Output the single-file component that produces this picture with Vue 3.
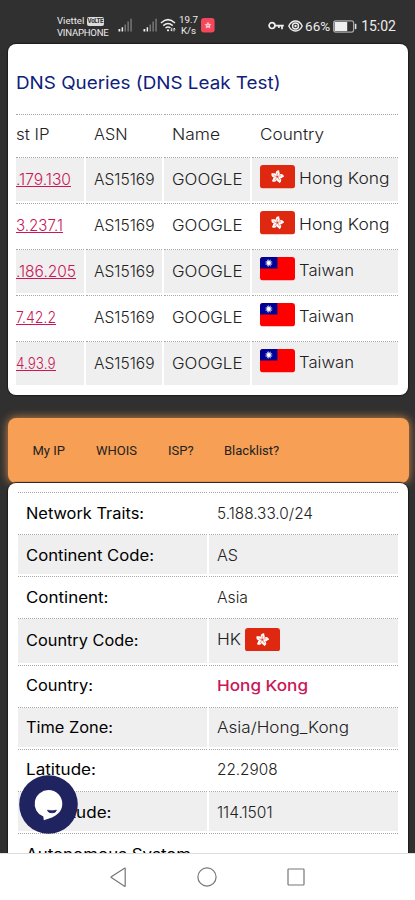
<script setup>
import { h } from 'vue'

// One line of text set to an exact measure; its bottom edge is the baseline.
const FitText = ({ text, w }) =>
  h('svg', { class: 'fit', width: w, height: 12 }, [
    h('text', { x: 0, y: 12, textLength: w, lengthAdjust: 'spacingAndGlyphs' }, text),
  ])
FitText.props = ['text', 'w']

const queries = [
  { ip: '.179.130', w: 55, flag: 'hk', country: 'Hong Kong', cw: 90.5 },
  { ip: '3.237.1', w: 47, flag: 'hk', country: 'Hong Kong', cw: 90.5 },
  { ip: '.186.205', w: 60, flag: 'tw', country: 'Taiwan', cw: 55 },
  { ip: '7.42.2', w: 40, flag: 'tw', country: 'Taiwan', cw: 55 },
  { ip: '4.93.9', w: 39.5, flag: 'tw', country: 'Taiwan', cw: 55 },
]
const traits = [
  { label: 'Network Traits:', lw: 118, value: '5.188.33.0/24', vw: 96 },
  { label: 'Continent Code:', lw: 128, value: 'AS', vw: 21 },
  { label: 'Continent:', lw: 82.5, value: 'Asia', vw: 31 },
  { label: 'Country Code:', lw: 112.5, value: 'HK', vw: 24, flag: true },
  { label: 'Country:', lw: 67, value: 'Hong Kong', vw: 91, strong: true },
  { label: 'Time Zone:', lw: 87, value: 'Asia/Hong_Kong', vw: 132 },
  { label: 'Latitude:', lw: 70, value: '22.2908', vw: 60.5 },
  { label: 'Longitude:', lw: 85.5, value: '114.1501', vw: 55.5 },
]
const petals = [0, 72, 144, 216, 288]
const rays = [0, 30, 60, 90, 120, 150]
</script>

<template>
  <div class="screen">
    <svg width="0" height="0" class="defs">
      <symbol id="hk" viewBox="0 0 35 23.5">
        <rect width="35" height="23.5" rx="3" fill="#de2810" />
        <g transform="translate(17.3 11.8)">
          <g v-for="a in petals" :key="a" :transform="`rotate(${a + 12})`">
            <path d="M0 -.6C-3.4 -2.4 -3 -6.2 .6 -6.8C.1 -5.4 2.6 -4.3 1.6 -2.2C1.2 -1.3 .5 -1.2 0 -.6Z" fill="#fff" />
            <path d="M0 -1Q-1.1 -2.4 -.5 -4" fill="none" stroke="#de2810" stroke-width=".45" />
          </g>
        </g>
      </symbol>
      <symbol id="tw" viewBox="0 0 35 23.5">
        <rect width="35" height="23.5" rx="3" fill="#fe0000" />
        <path d="M3 0H17.4V11.6H0V3Q0 0 3 0Z" fill="#000095" />
        <g transform="translate(8.8 6)">
          <path v-for="a in rays" :key="a" d="M0 -4.2L1 0L0 4.2L-1 0Z" :transform="`rotate(${a})`" fill="#fff" />
          <circle r="2.4" fill="#fff" stroke="#000095" stroke-width=".35" />
        </g>
      </symbol>
    </svg>

    <header class="status">
      <div class="carriers">
        <div class="carrier">Viettel <span class="volte">VoLTE</span></div>
        <div class="carrier second">VINAPHONE</div>
      </div>
      <svg v-for="n in 2" :key="n" class="signal" :class="'s' + n" width="15" height="14" viewBox="0 0 15 14">
        <path d="M.5 11H2.3V13.5H.5ZM3.6 9.3H5.1V13.5H3.6Z" fill="#eee" />
        <path d="M6.5 6.5H8V13.5H6.5ZM9.4 3.6H10.9V13.5H9.4ZM12.3 .7H13.8V13.5H12.3Z" fill="#777" />
      </svg>
      <svg class="wifi" width="17" height="15" viewBox="0 0 17 15" fill="none" stroke="#eee" stroke-width="1.5">
        <path d="M1 5Q8 -1.8 15 5M3.3 7.6Q8 3.3 12.7 7.6M5.5 10Q8 8 10.5 10" />
        <circle cx="8" cy="12.3" r="1.1" fill="#eee" stroke="none" />
        <path d="M11.8 9.8V13M10.7 11.8L11.8 13.2M14 13.3V10.2M14 10L15.2 11.4" stroke-width="1" />
      </svg>
      <div class="speed">19.7<br />K/s</div>
      <svg class="app" width="14" height="15" viewBox="0 0 14 15">
        <rect width="13.6" height="14.5" rx="3" fill="#f5475b" />
        <path d="M7 4.2L7.9 6.3L10 6.4L8.5 7.9L9 10L7 9L5 10L5.5 7.9L4 6.4L6.1 6.3Z" fill="#ffd7dc" stroke="#ffd7dc" stroke-width=".5" />
        <circle cx="7" cy="7.5" r=".7" fill="#f5475b" />
      </svg>
      <div class="right">
        <svg width="16" height="10" viewBox="0 0 16 10" fill="none" stroke="#eee" stroke-width="1.7">
          <circle cx="4" cy="4.6" r="2.9" />
          <path d="M7 4.6H15.8M14 4.6V8.3M10.9 4.6V7" />
        </svg>
        <svg class="eye" width="15" height="12" viewBox="0 0 15 12" fill="none" stroke="#eee" stroke-width="1.4">
          <path d="M.8 6Q3.2 1 7.5 1T14.2 6Q11.8 11 7.5 11T.8 6Z" />
          <circle cx="7.5" cy="6" r="3" />
          <circle cx="7.5" cy="6" r="1.2" fill="#eee" stroke="none" />
        </svg>
        <span class="pct">66%</span>
        <svg class="battery" width="24" height="13" viewBox="0 0 24 13">
          <rect x=".6" y=".9" width="20" height="11.2" rx="2" fill="#303030" stroke="#a5a5a5" stroke-width="1.2" />
          <rect x="1.6" y="1.9" width="12.6" height="9.2" fill="#eee" />
          <rect x="21.8" y="3.8" width="1.6" height="5.4" rx=".6" fill="#ddd" />
        </svg>
        <span class="clock">15:02</span>
      </div>
    </header>

    <section class="card dns">
      <h1><FitText text="DNS Queries (DNS Leak Test)" :w="264.5" /></h1>
      <div class="table">
        <div class="row head">
          <div class="cell ip"><FitText text="st IP" :w="33.5" /></div>
          <div class="cell"><FitText text="ASN" :w="33.5" /></div>
          <div class="cell"><FitText text="Name" :w="48" /></div>
          <div class="cell"><FitText text="Country" :w="64" /></div>
        </div>
        <div v-for="(q, i) in queries" :key="i" class="row" :class="{ shade: i % 2 === 0 }">
          <div class="cell ip">
            <a><FitText :text="q.ip" :w="q.w" /></a>
          </div>
          <div class="cell"><FitText text="AS15169" :w="60.5" /></div>
          <div class="cell"><FitText text="GOOGLE" :w="70.5" /></div>
          <div class="cell country">
            <svg class="flag" width="35" height="23.5"><use :href="'#' + q.flag" /></svg>
            <FitText :text="q.country" :w="q.cw" />
          </div>
        </div>
      </div>
    </section>

    <nav class="tabs">
      <a class="t1">My IP</a><a class="t2">WHOIS</a><a class="t3">ISP?</a><a>Blacklist?</a>
    </nav>

    <section class="card info">
      <div v-for="(t, i) in traits" :key="t.label" class="pair" :class="{ shade: i % 2, tall: t.flag }">
        <div class="cell label"><FitText :text="t.label" :w="t.lw" /></div>
        <div class="cell" :class="{ strong: t.strong }">
          <FitText :text="t.value" :w="t.vw" />
          <svg v-if="t.flag" class="flag" width="35" height="23.5"><use href="#hk" /></svg>
        </div>
      </div>
      <div class="pair">
        <div class="cell label"><FitText text="Autonomous System" :w="165" /></div>
        <div class="cell"></div>
      </div>
    </section>

    <button class="chat" aria-label="Chat">
      <svg width="59" height="59" viewBox="0 0 59 59">
        <circle cx="29.5" cy="29.5" r="29.3" fill="#1f2360" />
        <path d="M29.5 15A13.8 13.8 0 0 1 43.3 28.8C43.3 37 37.5 42 24.8 45.2L24.3 41.6A13.8 13.8 0 0 1 29.5 15Z" fill="#fff" />
        <path d="M28.5 35.2Q33 36.5 37.4 35.2Q37 37.8 33 37.8T28.5 35.2Z" fill="#1f2360" stroke="#1f2360" stroke-width=".8" />
      </svg>
    </button>

    <footer class="softkeys">
      <svg width="17" height="21" viewBox="0 0 17 21"><path d="M15.2 1.6V18.8Q15.2 19.6 14.5 19.2L1.3 10.6Q.8 10.2 1.3 9.8L14.5 1.2Q15.2 .8 15.2 1.6Z" /></svg>
      <svg width="20" height="20" viewBox="0 0 20 20"><circle cx="10" cy="10" r="9.1" /></svg>
      <svg width="18" height="18" viewBox="0 0 18 18"><rect x="1" y="1" width="16" height="16" rx=".8" /></svg>
    </footer>
  </div>
</template>

<style>
body { margin: 0; background: #303030; }
.fit { display: block; flex: none; overflow: visible; fill: currentColor; }
</style>

<style scoped>
.screen {
  position: relative;
  width: 415px;
  height: 900px;
  overflow: hidden;
  background: #303030;
  font: 300 15.2px Inter, "Open Sans", sans-serif;
  color: #222;
}
.defs { position: absolute; }
.status {
  display: flex;
  box-sizing: border-box;
  height: 44px;
  padding: 14px 19px 0 57px;
  color: #ececec;
  font: 400 9.6px/13px Roboto, sans-serif;
}
.carriers { width: 60.5px; margin-top: -.5px; }
.carrier { height: 12.5px; white-space: nowrap; }
.volte {
  display: inline-block;
  width: 15px;
  padding: 0 1px;
  border-radius: 2px;
  background: #ddd;
  color: #303030;
  font: 700 6.3px/9px Roboto, sans-serif;
  letter-spacing: -.45px;
  vertical-align: 1px;
  text-align: center;
}
.second { letter-spacing: -.25px; }
.signal { margin-top: 4px; }
.s2 { margin-left: 10px; }
.wifi { margin: 4px 0 0 2px; }
.speed { width: 20px; margin-left: 2px; text-align: center; line-height: 11px; font-size: 9.8px; }
.app { margin: 4px 0 0 2px; }
.right { display: flex; align-items: center; height: 24px; margin-left: auto; }
.eye { margin: 0 2px 0 4.5px; }
.pct { font-size: 13.5px; }
.battery { margin: 0 4px 0 3px; }
.clock { font-size: 14px; }

.card { margin: 0 7px 0 7.5px; background: #fff; box-shadow: 0 0 1px 1px #1c1c1c; }
.dns { height: 350.5px; padding: 0 10px 0 8.5px; border-radius: 8px; box-sizing: border-box; }
h1 { margin: 0; padding: 32.5px 0 25px; color: #0c217b; font: 400 17.6px Inter, sans-serif; }
.table { display: grid; gap: 2px; width: 382px; }
.row { display: grid; grid-template-columns: 68px 76px 86px 146px; gap: 2px; height: 44px; }
.head { height: 41px; }
.cell { box-sizing: border-box; padding: 15px 0 0 8px; border-top: 1px dotted #a8a8a8; overflow: hidden; }
.head .cell { padding-top: 13.5px; }
.row .cell.ip { padding-left: 0; }
.shade .cell { background: #efefef; background-clip: padding-box; }
.ip a { display: inline-block; padding-bottom: 1px; border-bottom: 1px solid #ca1758; color: #ca1758; vertical-align: top; }
.row .country { display: flex; gap: 4.5px; padding: 7.5px 0 0 7.5px; }
.country .fit { margin-top: 6.5px; }
.flag { flex: none; display: block; }

.tabs {
  display: flex;
  margin: 23.5px 6.5px 0 7.5px;
  height: 64.5px;
  padding-left: 25px;
  border-radius: 8px;
  background: #f69f55;
  box-shadow: 0 0 10px #d78a48;
  font: 400 13px/65px Roboto, sans-serif;
  box-sizing: border-box;
}
.t1 { width: 63.5px; }
.t2 { width: 72px; }
.t3 { width: 56px; }

.info { position: relative; display: flex; flex-direction: column; gap: 2px; height: 380px; padding: 9.5px 10px 0; border-radius: 8px; }
.pair { display: grid; grid-template-columns: 189px 189px; gap: 2px; height: 40.15px; flex: none; }
.pair .cell { padding-top: 13.5px; }
.label { font-weight: 400; color: #000; }
.tall { height: 44.2px; }
.tall .cell { display: flex; gap: 4px; padding-top: 13.5px; }
.tall .label { padding-top: 15px; }
.tall .flag { margin-top: -5px; }
.strong { color: #ca1758; font-weight: 500; }

.chat { position: absolute; left: 19.3px; top: 775.3px; width: 59px; height: 59px; padding: 0; border: 0; background: none; }
.chat svg { display: block; }
.softkeys {
  position: absolute;
  left: 0;
  top: 853px;
  width: 415px;
  height: 47px;
  box-sizing: border-box;
  padding: 0 110.5px 0 110px;
  border-top: 1px solid #ddd;
  background: #fff;
  display: flex;
  justify-content: space-between;
  align-items: center;
}
.softkeys svg { fill: none; stroke: #777; stroke-width: 1.2; }
</style>
